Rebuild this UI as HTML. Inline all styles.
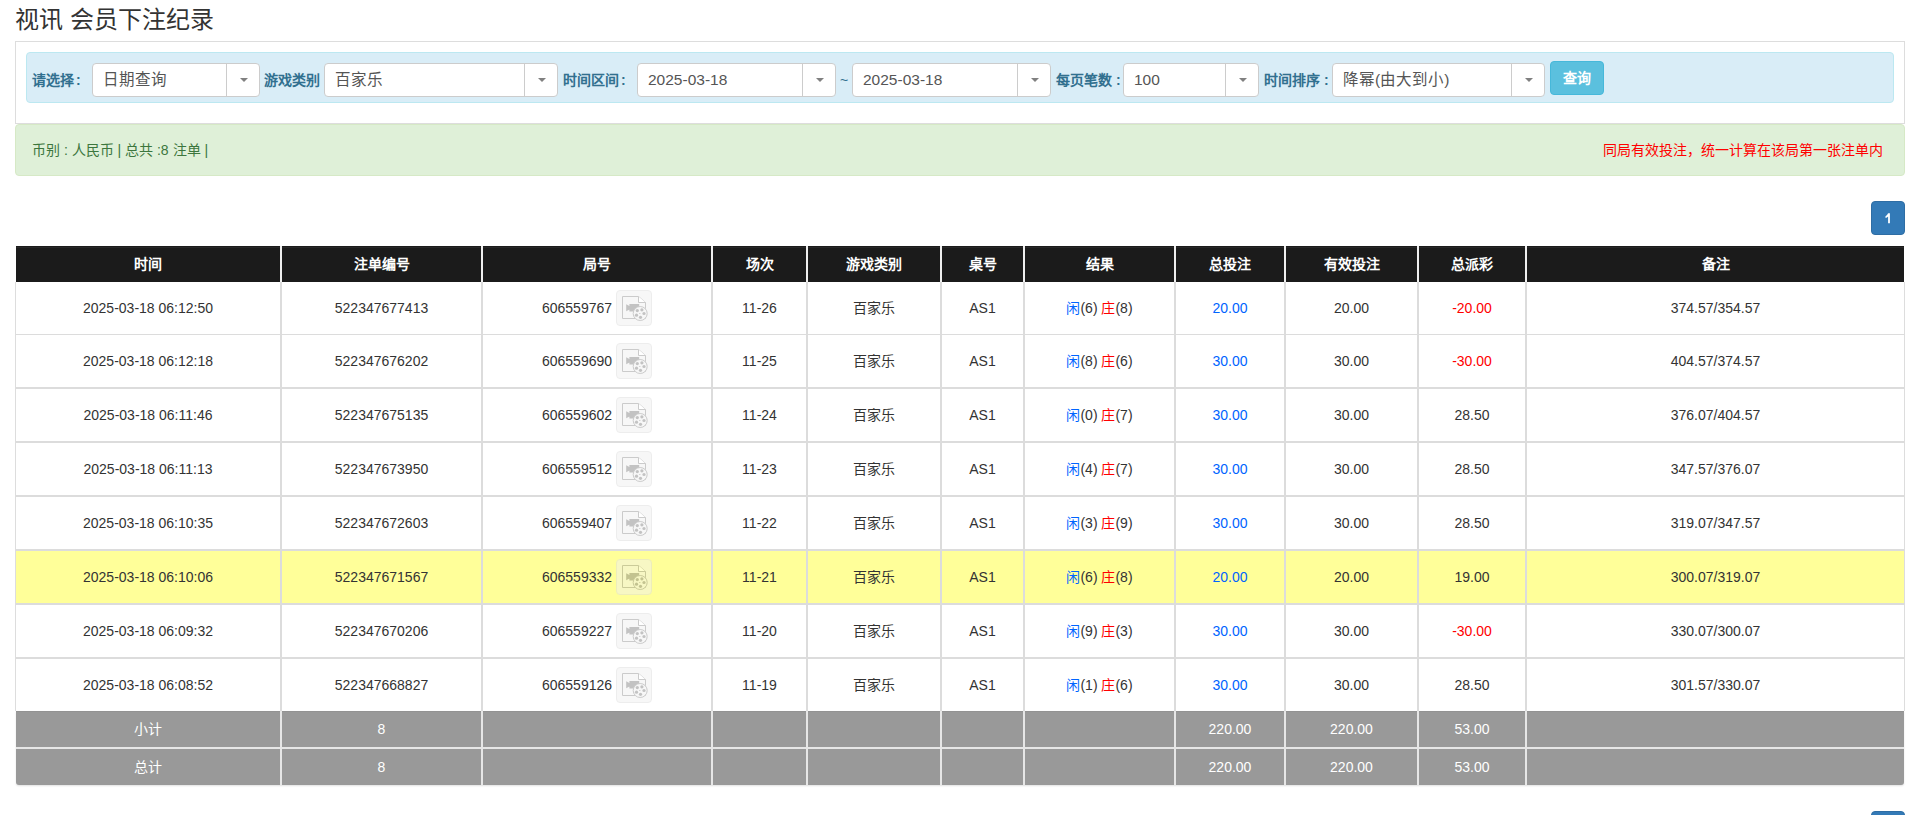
<!DOCTYPE html>
<html lang="zh-CN">
<head>
<meta charset="utf-8">
<style>
*{box-sizing:border-box;}
html,body{margin:0;padding:0;background:#fff;}
body{width:1919px;height:815px;overflow:hidden;position:relative;font-family:"Liberation Sans",sans-serif;color:#333;}
.abs{position:absolute;}
.title{left:15px;top:4px;font-size:24px;line-height:32px;color:#333;white-space:nowrap;}
.panel{left:15px;top:41px;width:1890px;height:83px;border:1px solid #ddd;background:#fff;}
.info{left:26px;top:52px;width:1868px;height:51px;border:1px solid #bce8f1;background:#d9edf7;border-radius:4px;}
.lbl{top:71px;font-size:14px;line-height:18px;font-weight:bold;color:#31708f;white-space:nowrap;}
.sel{top:63px;height:34px;border:1px solid #ccc;border-radius:4px;background:#fff;}
.sel .txt{position:absolute;left:10px;top:0;line-height:32px;font-size:15.5px;color:#555;white-space:nowrap;}
.sel .div{position:absolute;right:32px;top:0;bottom:0;width:1px;background:#ccc;}
.sel .arr{position:absolute;right:11px;top:14px;width:0;height:0;border-left:4px solid transparent;border-right:4px solid transparent;border-top:4px solid #808080;}
.btn{left:1550px;top:61px;width:54px;height:34px;background:#5bc0de;border:1px solid #46b8da;border-radius:4px;color:#fff;font-size:14px;font-weight:bold;line-height:32px;text-align:center;}
.alert{left:15px;top:124px;width:1890px;height:52px;background:#dff0d8;border:1px solid #d6e9c6;border-radius:4px;}
.alert .l{position:absolute;left:16px;top:16px;font-size:14px;line-height:18px;color:#3c763d;white-space:nowrap;}
.alert .r{position:absolute;right:21px;top:16px;font-size:14px;line-height:18px;color:#f00;white-space:nowrap;}
.page{left:1871px;width:34px;height:34px;background:#337ab7;border:1px solid #2e6da4;border-radius:4px;color:#fff;font-size:14px;font-weight:bold;line-height:32px;text-align:center;}
.hl{left:16px;width:1888px;background:#dcdcdc;}
.c{text-align:center;font-size:14px;color:#333;white-space:nowrap;}
.th{color:#fff;font-weight:bold;}
.sm{color:#fff;}
.bl{color:#0064ff;}
.rd{color:#f00;}
.ico{display:inline-block;width:36px;height:36px;vertical-align:middle;margin-left:4px;margin-top:-2px;border:1px solid #ddd;border-radius:4px;background:#f0f0f0;opacity:.5;position:relative;}
.ico svg{position:absolute;left:-1px;top:-1px;}
</style>
</head>
<body>
<div class="abs title">视讯 会员下注纪录</div>
<div class="abs panel"></div>
<div class="abs info"></div>

<div class="abs lbl" style="left:32px">请选择<span style="margin-left:2px">:</span></div>
<div class="abs sel" style="left:92px;width:168px"><span class="txt">日期查询</span><i class="div"></i><i class="arr"></i></div>

<div class="abs lbl" style="left:264px">游戏类别</div>
<div class="abs sel" style="left:324px;width:234px"><span class="txt">百家乐</span><i class="div"></i><i class="arr"></i></div>

<div class="abs lbl" style="left:563px">时间区间<span style="margin-left:2px">:</span></div>
<div class="abs sel" style="left:637px;width:199px"><span class="txt">2025-03-18</span><i class="div"></i><i class="arr"></i></div>
<div class="abs lbl" style="left:840px;font-weight:normal">~</div>
<div class="abs sel" style="left:852px;width:199px"><span class="txt">2025-03-18</span><i class="div"></i><i class="arr"></i></div>

<div class="abs lbl" style="left:1056px">每页笔数 :</div>
<div class="abs sel" style="left:1123px;width:136px"><span class="txt">100</span><i class="div"></i><i class="arr"></i></div>

<div class="abs lbl" style="left:1264px">时间排序 :</div>
<div class="abs sel" style="left:1332px;width:213px"><span class="txt">降幂(由大到小)</span><i class="div"></i><i class="arr"></i></div>

<div class="abs btn">查询</div>

<div class="abs alert"><span class="l">币别 : 人民币 | 总共 :8 注单 |</span><span class="r">同局有效投注，统一计算在该局第一张注单内</span></div>

<div class="abs page" style="top:201px"><svg width="32" height="32" style="position:absolute;left:0;top:0"><path d="M16.1 11.2H17.9V21.2H16.1V14.4Q15.1 15.4 13.5 15.9V14.2Q15.3 13.4 16.1 11.2Z" fill="#fff"/></svg></div>

<!--TABLE-->
<div class="abs" style="left:16px;top:246px;width:1888px;height:36px;background:#1b1b1b"></div>
<div class="abs" style="left:16px;top:247px;width:1888px;height:1px;background:#272727"></div>
<div class="abs" style="left:15px;top:282px;width:1890px;height:429px;background:#fff;border-left:1px solid #ddd;border-right:1px solid #ddd"></div>
<div class="abs" style="left:16px;top:551px;width:1888px;height:52px;background:#ffff99"></div>
<div class="abs hl" style="top:334px;height:1px"></div>
<div class="abs hl" style="top:387px;height:2px"></div>
<div class="abs hl" style="top:441px;height:2px"></div>
<div class="abs hl" style="top:495px;height:2px"></div>
<div class="abs hl" style="top:549px;height:2px"></div>
<div class="abs hl" style="top:603px;height:2px"></div>
<div class="abs hl" style="top:657px;height:2px"></div>
<div class="abs" style="left:16px;top:711px;width:1888px;height:74px;background:#999;border-radius:0 0 3px 3px;box-shadow:0 1px 2px rgba(0,0,0,.12)"></div>
<div class="abs" style="left:16px;top:711px;width:1888px;height:1px;background:#929292"></div>
<div class="abs" style="left:16px;top:747px;width:1888px;height:2px;background:#e6e6e6"></div>
<div class="abs" style="left:280px;top:246px;width:2px;height:36px;background:#efefef"></div>
<div class="abs" style="left:280px;top:282px;width:2px;height:429px;background:#dcdcdc"></div>
<div class="abs" style="left:280px;top:711px;width:2px;height:74px;background:#e6e6e6"></div>
<div class="abs" style="left:481px;top:246px;width:2px;height:36px;background:#efefef"></div>
<div class="abs" style="left:481px;top:282px;width:2px;height:429px;background:#dcdcdc"></div>
<div class="abs" style="left:481px;top:711px;width:2px;height:74px;background:#e6e6e6"></div>
<div class="abs" style="left:711px;top:246px;width:2px;height:36px;background:#efefef"></div>
<div class="abs" style="left:711px;top:282px;width:2px;height:429px;background:#dcdcdc"></div>
<div class="abs" style="left:711px;top:711px;width:2px;height:74px;background:#e6e6e6"></div>
<div class="abs" style="left:806px;top:246px;width:2px;height:36px;background:#efefef"></div>
<div class="abs" style="left:806px;top:282px;width:2px;height:429px;background:#dcdcdc"></div>
<div class="abs" style="left:806px;top:711px;width:2px;height:74px;background:#e6e6e6"></div>
<div class="abs" style="left:940px;top:246px;width:2px;height:36px;background:#efefef"></div>
<div class="abs" style="left:940px;top:282px;width:2px;height:429px;background:#dcdcdc"></div>
<div class="abs" style="left:940px;top:711px;width:2px;height:74px;background:#e6e6e6"></div>
<div class="abs" style="left:1023px;top:246px;width:2px;height:36px;background:#efefef"></div>
<div class="abs" style="left:1023px;top:282px;width:2px;height:429px;background:#dcdcdc"></div>
<div class="abs" style="left:1023px;top:711px;width:2px;height:74px;background:#e6e6e6"></div>
<div class="abs" style="left:1174px;top:246px;width:2px;height:36px;background:#efefef"></div>
<div class="abs" style="left:1174px;top:282px;width:2px;height:429px;background:#dcdcdc"></div>
<div class="abs" style="left:1174px;top:711px;width:2px;height:74px;background:#e6e6e6"></div>
<div class="abs" style="left:1284px;top:246px;width:2px;height:36px;background:#efefef"></div>
<div class="abs" style="left:1284px;top:282px;width:2px;height:429px;background:#dcdcdc"></div>
<div class="abs" style="left:1284px;top:711px;width:2px;height:74px;background:#e6e6e6"></div>
<div class="abs" style="left:1417px;top:246px;width:2px;height:36px;background:#efefef"></div>
<div class="abs" style="left:1417px;top:282px;width:2px;height:429px;background:#dcdcdc"></div>
<div class="abs" style="left:1417px;top:711px;width:2px;height:74px;background:#e6e6e6"></div>
<div class="abs" style="left:1525px;top:246px;width:2px;height:36px;background:#efefef"></div>
<div class="abs" style="left:1525px;top:282px;width:2px;height:429px;background:#dcdcdc"></div>
<div class="abs" style="left:1525px;top:711px;width:2px;height:74px;background:#e6e6e6"></div>
<div class="abs c th" style="left:16px;top:246px;width:264px;height:36px;line-height:36px">时间</div>
<div class="abs c th" style="left:282px;top:246px;width:199px;height:36px;line-height:36px">注单编号</div>
<div class="abs c th" style="left:483px;top:246px;width:228px;height:36px;line-height:36px">局号</div>
<div class="abs c th" style="left:713px;top:246px;width:93px;height:36px;line-height:36px">场次</div>
<div class="abs c th" style="left:808px;top:246px;width:132px;height:36px;line-height:36px">游戏类别</div>
<div class="abs c th" style="left:942px;top:246px;width:81px;height:36px;line-height:36px">桌号</div>
<div class="abs c th" style="left:1025px;top:246px;width:149px;height:36px;line-height:36px">结果</div>
<div class="abs c th" style="left:1176px;top:246px;width:108px;height:36px;line-height:36px">总投注</div>
<div class="abs c th" style="left:1286px;top:246px;width:131px;height:36px;line-height:36px">有效投注</div>
<div class="abs c th" style="left:1419px;top:246px;width:106px;height:36px;line-height:36px">总派彩</div>
<div class="abs c th" style="left:1527px;top:246px;width:377px;height:36px;line-height:36px">备注</div>
<div class="abs c" style="left:16px;top:282px;width:264px;height:52px;line-height:52px">2025-03-18 06:12:50</div>
<div class="abs c" style="left:282px;top:282px;width:199px;height:52px;line-height:52px">522347677413</div>
<div class="abs c" style="left:483px;top:282px;width:228px;height:52px;line-height:52px">606559767<i class="ico"><svg width="36" height="36" viewBox="0 0 36 36"><path d="M6.5 6.5H22.5L29.5 12.5V28.5H6.5Z" fill="none" stroke="#999" stroke-width="1"/><path d="M22.5 6.5V12.5H29.5" fill="#fff" stroke="#999" stroke-width="1"/><path d="M10.2 14.2L13.4 16V19.6L10.2 21.2Z M13.4 14H23.2V21.4H13.4Z" fill="#888"/><circle cx="24.2" cy="23.5" r="7" fill="#f0f0f0" stroke="#999" stroke-width="1"/><g fill="#888"><circle cx="21.3" cy="20.6" r="1.6"/><circle cx="25.9" cy="19.8" r="1.6"/><circle cx="28" cy="23.5" r="1.6"/><circle cx="24.5" cy="27.3" r="1.6"/><circle cx="20.5" cy="25.2" r="1.6"/><rect x="23.2" y="23.1" width="1.2" height=".8"/></g></svg></i></div>
<div class="abs c" style="left:713px;top:282px;width:93px;height:52px;line-height:52px">11-26</div>
<div class="abs c" style="left:808px;top:282px;width:132px;height:52px;line-height:52px">百家乐</div>
<div class="abs c" style="left:942px;top:282px;width:81px;height:52px;line-height:52px">AS1</div>
<div class="abs c" style="left:1025px;top:282px;width:149px;height:52px;line-height:52px"><span class="bl">闲</span>(6) <span class="rd">庄</span>(8)</div>
<div class="abs c" style="left:1176px;top:282px;width:108px;height:52px;line-height:52px"><span class="bl">20.00</span></div>
<div class="abs c" style="left:1286px;top:282px;width:131px;height:52px;line-height:52px">20.00</div>
<div class="abs c" style="left:1419px;top:282px;width:106px;height:52px;line-height:52px"><span class="rd">-20.00</span></div>
<div class="abs c" style="left:1527px;top:282px;width:377px;height:52px;line-height:52px">374.57/354.57</div>
<div class="abs c" style="left:16px;top:335px;width:264px;height:52px;line-height:52px">2025-03-18 06:12:18</div>
<div class="abs c" style="left:282px;top:335px;width:199px;height:52px;line-height:52px">522347676202</div>
<div class="abs c" style="left:483px;top:335px;width:228px;height:52px;line-height:52px">606559690<i class="ico"><svg width="36" height="36" viewBox="0 0 36 36"><path d="M6.5 6.5H22.5L29.5 12.5V28.5H6.5Z" fill="none" stroke="#999" stroke-width="1"/><path d="M22.5 6.5V12.5H29.5" fill="#fff" stroke="#999" stroke-width="1"/><path d="M10.2 14.2L13.4 16V19.6L10.2 21.2Z M13.4 14H23.2V21.4H13.4Z" fill="#888"/><circle cx="24.2" cy="23.5" r="7" fill="#f0f0f0" stroke="#999" stroke-width="1"/><g fill="#888"><circle cx="21.3" cy="20.6" r="1.6"/><circle cx="25.9" cy="19.8" r="1.6"/><circle cx="28" cy="23.5" r="1.6"/><circle cx="24.5" cy="27.3" r="1.6"/><circle cx="20.5" cy="25.2" r="1.6"/><rect x="23.2" y="23.1" width="1.2" height=".8"/></g></svg></i></div>
<div class="abs c" style="left:713px;top:335px;width:93px;height:52px;line-height:52px">11-25</div>
<div class="abs c" style="left:808px;top:335px;width:132px;height:52px;line-height:52px">百家乐</div>
<div class="abs c" style="left:942px;top:335px;width:81px;height:52px;line-height:52px">AS1</div>
<div class="abs c" style="left:1025px;top:335px;width:149px;height:52px;line-height:52px"><span class="bl">闲</span>(8) <span class="rd">庄</span>(6)</div>
<div class="abs c" style="left:1176px;top:335px;width:108px;height:52px;line-height:52px"><span class="bl">30.00</span></div>
<div class="abs c" style="left:1286px;top:335px;width:131px;height:52px;line-height:52px">30.00</div>
<div class="abs c" style="left:1419px;top:335px;width:106px;height:52px;line-height:52px"><span class="rd">-30.00</span></div>
<div class="abs c" style="left:1527px;top:335px;width:377px;height:52px;line-height:52px">404.57/374.57</div>
<div class="abs c" style="left:16px;top:389px;width:264px;height:52px;line-height:52px">2025-03-18 06:11:46</div>
<div class="abs c" style="left:282px;top:389px;width:199px;height:52px;line-height:52px">522347675135</div>
<div class="abs c" style="left:483px;top:389px;width:228px;height:52px;line-height:52px">606559602<i class="ico"><svg width="36" height="36" viewBox="0 0 36 36"><path d="M6.5 6.5H22.5L29.5 12.5V28.5H6.5Z" fill="none" stroke="#999" stroke-width="1"/><path d="M22.5 6.5V12.5H29.5" fill="#fff" stroke="#999" stroke-width="1"/><path d="M10.2 14.2L13.4 16V19.6L10.2 21.2Z M13.4 14H23.2V21.4H13.4Z" fill="#888"/><circle cx="24.2" cy="23.5" r="7" fill="#f0f0f0" stroke="#999" stroke-width="1"/><g fill="#888"><circle cx="21.3" cy="20.6" r="1.6"/><circle cx="25.9" cy="19.8" r="1.6"/><circle cx="28" cy="23.5" r="1.6"/><circle cx="24.5" cy="27.3" r="1.6"/><circle cx="20.5" cy="25.2" r="1.6"/><rect x="23.2" y="23.1" width="1.2" height=".8"/></g></svg></i></div>
<div class="abs c" style="left:713px;top:389px;width:93px;height:52px;line-height:52px">11-24</div>
<div class="abs c" style="left:808px;top:389px;width:132px;height:52px;line-height:52px">百家乐</div>
<div class="abs c" style="left:942px;top:389px;width:81px;height:52px;line-height:52px">AS1</div>
<div class="abs c" style="left:1025px;top:389px;width:149px;height:52px;line-height:52px"><span class="bl">闲</span>(0) <span class="rd">庄</span>(7)</div>
<div class="abs c" style="left:1176px;top:389px;width:108px;height:52px;line-height:52px"><span class="bl">30.00</span></div>
<div class="abs c" style="left:1286px;top:389px;width:131px;height:52px;line-height:52px">30.00</div>
<div class="abs c" style="left:1419px;top:389px;width:106px;height:52px;line-height:52px">28.50</div>
<div class="abs c" style="left:1527px;top:389px;width:377px;height:52px;line-height:52px">376.07/404.57</div>
<div class="abs c" style="left:16px;top:443px;width:264px;height:52px;line-height:52px">2025-03-18 06:11:13</div>
<div class="abs c" style="left:282px;top:443px;width:199px;height:52px;line-height:52px">522347673950</div>
<div class="abs c" style="left:483px;top:443px;width:228px;height:52px;line-height:52px">606559512<i class="ico"><svg width="36" height="36" viewBox="0 0 36 36"><path d="M6.5 6.5H22.5L29.5 12.5V28.5H6.5Z" fill="none" stroke="#999" stroke-width="1"/><path d="M22.5 6.5V12.5H29.5" fill="#fff" stroke="#999" stroke-width="1"/><path d="M10.2 14.2L13.4 16V19.6L10.2 21.2Z M13.4 14H23.2V21.4H13.4Z" fill="#888"/><circle cx="24.2" cy="23.5" r="7" fill="#f0f0f0" stroke="#999" stroke-width="1"/><g fill="#888"><circle cx="21.3" cy="20.6" r="1.6"/><circle cx="25.9" cy="19.8" r="1.6"/><circle cx="28" cy="23.5" r="1.6"/><circle cx="24.5" cy="27.3" r="1.6"/><circle cx="20.5" cy="25.2" r="1.6"/><rect x="23.2" y="23.1" width="1.2" height=".8"/></g></svg></i></div>
<div class="abs c" style="left:713px;top:443px;width:93px;height:52px;line-height:52px">11-23</div>
<div class="abs c" style="left:808px;top:443px;width:132px;height:52px;line-height:52px">百家乐</div>
<div class="abs c" style="left:942px;top:443px;width:81px;height:52px;line-height:52px">AS1</div>
<div class="abs c" style="left:1025px;top:443px;width:149px;height:52px;line-height:52px"><span class="bl">闲</span>(4) <span class="rd">庄</span>(7)</div>
<div class="abs c" style="left:1176px;top:443px;width:108px;height:52px;line-height:52px"><span class="bl">30.00</span></div>
<div class="abs c" style="left:1286px;top:443px;width:131px;height:52px;line-height:52px">30.00</div>
<div class="abs c" style="left:1419px;top:443px;width:106px;height:52px;line-height:52px">28.50</div>
<div class="abs c" style="left:1527px;top:443px;width:377px;height:52px;line-height:52px">347.57/376.07</div>
<div class="abs c" style="left:16px;top:497px;width:264px;height:52px;line-height:52px">2025-03-18 06:10:35</div>
<div class="abs c" style="left:282px;top:497px;width:199px;height:52px;line-height:52px">522347672603</div>
<div class="abs c" style="left:483px;top:497px;width:228px;height:52px;line-height:52px">606559407<i class="ico"><svg width="36" height="36" viewBox="0 0 36 36"><path d="M6.5 6.5H22.5L29.5 12.5V28.5H6.5Z" fill="none" stroke="#999" stroke-width="1"/><path d="M22.5 6.5V12.5H29.5" fill="#fff" stroke="#999" stroke-width="1"/><path d="M10.2 14.2L13.4 16V19.6L10.2 21.2Z M13.4 14H23.2V21.4H13.4Z" fill="#888"/><circle cx="24.2" cy="23.5" r="7" fill="#f0f0f0" stroke="#999" stroke-width="1"/><g fill="#888"><circle cx="21.3" cy="20.6" r="1.6"/><circle cx="25.9" cy="19.8" r="1.6"/><circle cx="28" cy="23.5" r="1.6"/><circle cx="24.5" cy="27.3" r="1.6"/><circle cx="20.5" cy="25.2" r="1.6"/><rect x="23.2" y="23.1" width="1.2" height=".8"/></g></svg></i></div>
<div class="abs c" style="left:713px;top:497px;width:93px;height:52px;line-height:52px">11-22</div>
<div class="abs c" style="left:808px;top:497px;width:132px;height:52px;line-height:52px">百家乐</div>
<div class="abs c" style="left:942px;top:497px;width:81px;height:52px;line-height:52px">AS1</div>
<div class="abs c" style="left:1025px;top:497px;width:149px;height:52px;line-height:52px"><span class="bl">闲</span>(3) <span class="rd">庄</span>(9)</div>
<div class="abs c" style="left:1176px;top:497px;width:108px;height:52px;line-height:52px"><span class="bl">30.00</span></div>
<div class="abs c" style="left:1286px;top:497px;width:131px;height:52px;line-height:52px">30.00</div>
<div class="abs c" style="left:1419px;top:497px;width:106px;height:52px;line-height:52px">28.50</div>
<div class="abs c" style="left:1527px;top:497px;width:377px;height:52px;line-height:52px">319.07/347.57</div>
<div class="abs c" style="left:16px;top:551px;width:264px;height:52px;line-height:52px">2025-03-18 06:10:06</div>
<div class="abs c" style="left:282px;top:551px;width:199px;height:52px;line-height:52px">522347671567</div>
<div class="abs c" style="left:483px;top:551px;width:228px;height:52px;line-height:52px">606559332<i class="ico"><svg width="36" height="36" viewBox="0 0 36 36"><path d="M6.5 6.5H22.5L29.5 12.5V28.5H6.5Z" fill="none" stroke="#999" stroke-width="1"/><path d="M22.5 6.5V12.5H29.5" fill="#fff" stroke="#999" stroke-width="1"/><path d="M10.2 14.2L13.4 16V19.6L10.2 21.2Z M13.4 14H23.2V21.4H13.4Z" fill="#888"/><circle cx="24.2" cy="23.5" r="7" fill="#f0f0f0" stroke="#999" stroke-width="1"/><g fill="#888"><circle cx="21.3" cy="20.6" r="1.6"/><circle cx="25.9" cy="19.8" r="1.6"/><circle cx="28" cy="23.5" r="1.6"/><circle cx="24.5" cy="27.3" r="1.6"/><circle cx="20.5" cy="25.2" r="1.6"/><rect x="23.2" y="23.1" width="1.2" height=".8"/></g></svg></i></div>
<div class="abs c" style="left:713px;top:551px;width:93px;height:52px;line-height:52px">11-21</div>
<div class="abs c" style="left:808px;top:551px;width:132px;height:52px;line-height:52px">百家乐</div>
<div class="abs c" style="left:942px;top:551px;width:81px;height:52px;line-height:52px">AS1</div>
<div class="abs c" style="left:1025px;top:551px;width:149px;height:52px;line-height:52px"><span class="bl">闲</span>(6) <span class="rd">庄</span>(8)</div>
<div class="abs c" style="left:1176px;top:551px;width:108px;height:52px;line-height:52px"><span class="bl">20.00</span></div>
<div class="abs c" style="left:1286px;top:551px;width:131px;height:52px;line-height:52px">20.00</div>
<div class="abs c" style="left:1419px;top:551px;width:106px;height:52px;line-height:52px">19.00</div>
<div class="abs c" style="left:1527px;top:551px;width:377px;height:52px;line-height:52px">300.07/319.07</div>
<div class="abs c" style="left:16px;top:605px;width:264px;height:52px;line-height:52px">2025-03-18 06:09:32</div>
<div class="abs c" style="left:282px;top:605px;width:199px;height:52px;line-height:52px">522347670206</div>
<div class="abs c" style="left:483px;top:605px;width:228px;height:52px;line-height:52px">606559227<i class="ico"><svg width="36" height="36" viewBox="0 0 36 36"><path d="M6.5 6.5H22.5L29.5 12.5V28.5H6.5Z" fill="none" stroke="#999" stroke-width="1"/><path d="M22.5 6.5V12.5H29.5" fill="#fff" stroke="#999" stroke-width="1"/><path d="M10.2 14.2L13.4 16V19.6L10.2 21.2Z M13.4 14H23.2V21.4H13.4Z" fill="#888"/><circle cx="24.2" cy="23.5" r="7" fill="#f0f0f0" stroke="#999" stroke-width="1"/><g fill="#888"><circle cx="21.3" cy="20.6" r="1.6"/><circle cx="25.9" cy="19.8" r="1.6"/><circle cx="28" cy="23.5" r="1.6"/><circle cx="24.5" cy="27.3" r="1.6"/><circle cx="20.5" cy="25.2" r="1.6"/><rect x="23.2" y="23.1" width="1.2" height=".8"/></g></svg></i></div>
<div class="abs c" style="left:713px;top:605px;width:93px;height:52px;line-height:52px">11-20</div>
<div class="abs c" style="left:808px;top:605px;width:132px;height:52px;line-height:52px">百家乐</div>
<div class="abs c" style="left:942px;top:605px;width:81px;height:52px;line-height:52px">AS1</div>
<div class="abs c" style="left:1025px;top:605px;width:149px;height:52px;line-height:52px"><span class="bl">闲</span>(9) <span class="rd">庄</span>(3)</div>
<div class="abs c" style="left:1176px;top:605px;width:108px;height:52px;line-height:52px"><span class="bl">30.00</span></div>
<div class="abs c" style="left:1286px;top:605px;width:131px;height:52px;line-height:52px">30.00</div>
<div class="abs c" style="left:1419px;top:605px;width:106px;height:52px;line-height:52px"><span class="rd">-30.00</span></div>
<div class="abs c" style="left:1527px;top:605px;width:377px;height:52px;line-height:52px">330.07/300.07</div>
<div class="abs c" style="left:16px;top:659px;width:264px;height:52px;line-height:52px">2025-03-18 06:08:52</div>
<div class="abs c" style="left:282px;top:659px;width:199px;height:52px;line-height:52px">522347668827</div>
<div class="abs c" style="left:483px;top:659px;width:228px;height:52px;line-height:52px">606559126<i class="ico"><svg width="36" height="36" viewBox="0 0 36 36"><path d="M6.5 6.5H22.5L29.5 12.5V28.5H6.5Z" fill="none" stroke="#999" stroke-width="1"/><path d="M22.5 6.5V12.5H29.5" fill="#fff" stroke="#999" stroke-width="1"/><path d="M10.2 14.2L13.4 16V19.6L10.2 21.2Z M13.4 14H23.2V21.4H13.4Z" fill="#888"/><circle cx="24.2" cy="23.5" r="7" fill="#f0f0f0" stroke="#999" stroke-width="1"/><g fill="#888"><circle cx="21.3" cy="20.6" r="1.6"/><circle cx="25.9" cy="19.8" r="1.6"/><circle cx="28" cy="23.5" r="1.6"/><circle cx="24.5" cy="27.3" r="1.6"/><circle cx="20.5" cy="25.2" r="1.6"/><rect x="23.2" y="23.1" width="1.2" height=".8"/></g></svg></i></div>
<div class="abs c" style="left:713px;top:659px;width:93px;height:52px;line-height:52px">11-19</div>
<div class="abs c" style="left:808px;top:659px;width:132px;height:52px;line-height:52px">百家乐</div>
<div class="abs c" style="left:942px;top:659px;width:81px;height:52px;line-height:52px">AS1</div>
<div class="abs c" style="left:1025px;top:659px;width:149px;height:52px;line-height:52px"><span class="bl">闲</span>(1) <span class="rd">庄</span>(6)</div>
<div class="abs c" style="left:1176px;top:659px;width:108px;height:52px;line-height:52px"><span class="bl">30.00</span></div>
<div class="abs c" style="left:1286px;top:659px;width:131px;height:52px;line-height:52px">30.00</div>
<div class="abs c" style="left:1419px;top:659px;width:106px;height:52px;line-height:52px">28.50</div>
<div class="abs c" style="left:1527px;top:659px;width:377px;height:52px;line-height:52px">301.57/330.07</div>
<div class="abs c sm" style="left:16px;top:711px;width:264px;height:36px;line-height:36px">小计</div>
<div class="abs c sm" style="left:282px;top:711px;width:199px;height:36px;line-height:36px">8</div>
<div class="abs c sm" style="left:1176px;top:711px;width:108px;height:36px;line-height:36px">220.00</div>
<div class="abs c sm" style="left:1286px;top:711px;width:131px;height:36px;line-height:36px">220.00</div>
<div class="abs c sm" style="left:1419px;top:711px;width:106px;height:36px;line-height:36px">53.00</div>
<div class="abs c sm" style="left:16px;top:749px;width:264px;height:36px;line-height:36px">总计</div>
<div class="abs c sm" style="left:282px;top:749px;width:199px;height:36px;line-height:36px">8</div>
<div class="abs c sm" style="left:1176px;top:749px;width:108px;height:36px;line-height:36px">220.00</div>
<div class="abs c sm" style="left:1286px;top:749px;width:131px;height:36px;line-height:36px">220.00</div>
<div class="abs c sm" style="left:1419px;top:749px;width:106px;height:36px;line-height:36px">53.00</div>
<!--/TABLE-->

<div class="abs page" style="top:811px"></div>
</body>
</html>
